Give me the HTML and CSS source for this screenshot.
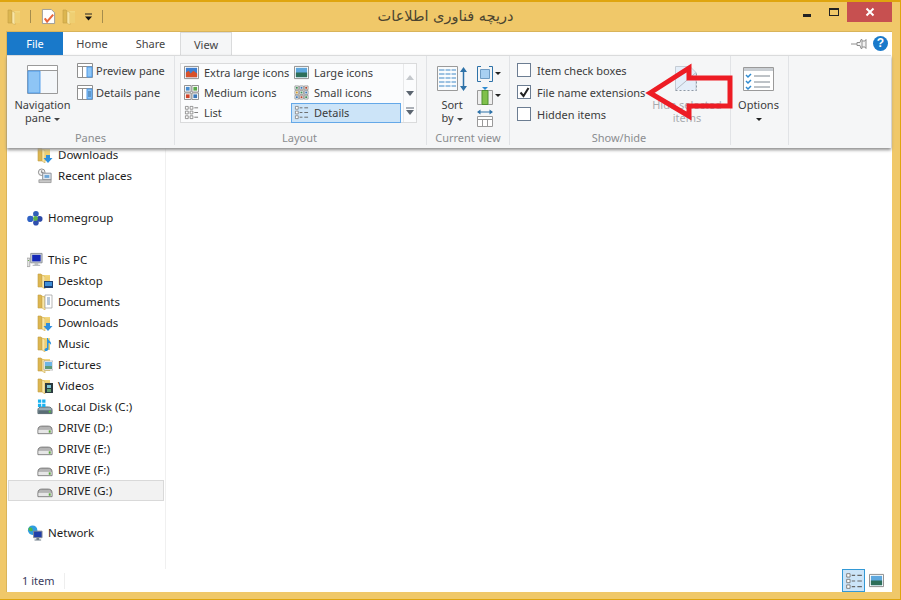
FILE: index.html
```html
<!DOCTYPE html>
<html lang="en">
<head>
    <meta charset="UTF-8">
    <meta name="viewport" content="width=device-width, initial-scale=1.0">
    <title>Explorer</title>
    <link rel="stylesheet" href="styles.css">
</head>
<body>
<svg class="defs" width="0" height="0">
    <symbol id="folder" viewBox="0 0 16 16">
        <path d="M1 1h3l1 1v12H1z" fill="#dcb650" stroke="#c4a045" stroke-width=".6"/>
        <path d="M5 2h8v12H5z" fill="#f2d77f"/>
        <path d="M5 2l3 1.500V16L5 14z" fill="#f8e6a6" stroke="#d0ac50" stroke-width=".6"/>
        <path d="M8 3.500h5V14H8z" fill="#efcf72"/>
    </symbol>
    <symbol id="folder-down" viewBox="0 0 16 16">
        <use href="#folder"/>
        <path d="M9 8h4v3h2.500l-4.500 5-4.500-5H9z" fill="#2f8fde"/>
    </symbol>
    <symbol id="folder-desk" viewBox="0 0 16 16">
        <use href="#folder"/>
        <path d="M7 8h9v7H7z" fill="#1d3f73"/><path d="M8 9h7v4H8z" fill="#3f8fd8"/>
    </symbol>
    <symbol id="folder-doc" viewBox="0 0 16 16">
        <use href="#folder"/>
        <path d="M8 1h7v13H8z" fill="#fff" stroke="#9a9a9a" stroke-width=".7"/>
        <path d="M10 4h3M10 6h3M10 8h3M10 10h3" stroke="#6d8fb5"/>
    </symbol>
    <symbol id="folder-music" viewBox="0 0 16 16">
        <use href="#folder"/>
        <path d="M10 2l1 0c0 3 4 3 3 7-.5-1.500-1.500-2-2.500-2v6c0 2-4 3-4 1 0-1.500 1.500-2 2.500-2z" fill="#2a94e0"/>
    </symbol>
    <symbol id="folder-pic" viewBox="0 0 16 16">
        <use href="#folder"/>
        <path d="M7 4h9v9H7z" fill="#fff" stroke="#a5a5a5" stroke-width=".7"/>
        <path d="M8 5h7v4H8z" fill="#6db6e6"/><path d="M8 9h7v3H8z" fill="#5c9a78"/>
    </symbol>
    <symbol id="folder-vid" viewBox="0 0 16 16">
        <use href="#folder"/>
        <path d="M8 5h8v10H8z" fill="#2b3a40"/><path d="M10 7h4v3h-4z" fill="#7ec6d8"/><path d="M10 11h4v3h-4z" fill="#5f9e6e"/>
    </symbol>
    <symbol id="drive" viewBox="0 0 17 16">
        <path d="M1 10c0-3 2-4 4-4h7c2 0 4 1 4 4v4H1z" fill="#b4b4b4" stroke="#757575"/>
        <path d="M1.500 10h14v3.500h-14z" fill="#e6e6e6"/>
        <path d="M12.500 10.500h2v2.500h-2z" fill="#58a83a"/>
    </symbol>
    <symbol id="drive-c" viewBox="0 0 17 16">
        <path d="M1 11c0-2 2-3 4-3h7c2 0 4 1 4 3v4H1z" fill="#9aabb3" stroke="#55666e"/>
        <path d="M1.500 11.500h14v3h-14z" fill="#5a6d76"/>
        <path d="M12.500 12h2v2h-2z" fill="#58c83a"/>
        <path d="M1 0h3.500v3.500H1zM5.500 0H9v3.500H5.500zM1 4.500h3.500V8H1zM5.500 4.500H9V8H5.500z" fill="#19b2f0"/>
    </symbol>
    <symbol id="recent" viewBox="0 0 17 16">
        <circle cx="5" cy="4" r="3.500" fill="#f2f2f2" stroke="#8a8a8a"/>
        <path d="M5 2v2.500h2" stroke="#555" fill="none" stroke-width=".8"/>
        <path d="M6 5h9v7H6z" fill="#dfe6ee" stroke="#8a8f96"/>
        <path d="M8 7h5v3H8z" fill="#6ca6d9"/>
        <path d="M2 12h13v3H2z" fill="#c8c8c8" stroke="#8a8a8a" stroke-width=".7"/>
    </symbol>
    <symbol id="homegroup" viewBox="0 0 17 16">
        <path d="M9 3L4 8l6 5 4-5z" fill="none" stroke="#7aa3c9"/>
        <circle cx="9.500" cy="3.500" r="3" fill="#2f5fb8"/>
        <circle cx="3.500" cy="9" r="3.300" fill="#2f62c4"/>
        <circle cx="13.500" cy="9" r="3" fill="#2c4aa8"/>
        <circle cx="9.500" cy="13" r="3" fill="#2f4fae"/>
        <circle cx="9" cy="8.500" r="2.600" fill="#5eb348"/>
    </symbol>
    <symbol id="thispc" viewBox="0 0 17 16">
        <path d="M0 6h3v9H0z" fill="#e4e4e4" stroke="#8f8f8f" stroke-width=".7"/>
        <path d="M1 8h1v1H1z" fill="#58a83a"/>
        <path d="M4 1h12v10H4z" fill="#cfd4d8" stroke="#8a8f96"/>
        <path d="M5.500 2.500h9v7h-9z" fill="#1428b8"/>
        <path d="M8 11h4v2h2v1.500H6V13h2z" fill="#b9bdc1"/>
    </symbol>
    <symbol id="network" viewBox="0 0 17 16">
        <circle cx="6" cy="5" r="5" fill="#2f9de0"/>
        <path d="M3 2c2 0 3 1 3 3S3 6 2 5s0-3 1-3zM8 6c1 0 2 1 1 3S7 8 8 6z" fill="#4fb848"/>
        <path d="M7 6h9v7H7z" fill="#1f3fa8" stroke="#8a8f96"/>
        <path d="M10 13h3v2h2v1H8v-1h2z" fill="#6f7c88"/>
    </symbol>
    <symbol id="s-list" viewBox="0 0 16 16">
        <path d="M1.500 1.500h3v3h-3zM1.500 6.500h3v3h-3zM1.500 11.500h3v3h-3zM6.500 1.500h3v3h-3zM6.500 6.500h3v3h-3zM6.500 11.500h3v3h-3z" fill="#fff" stroke="#777" stroke-width=".8"/>
        <path d="M11 3h4M11 8h4M11 13h4" stroke="#777"/>
    </symbol>
    <symbol id="s-details" viewBox="0 0 16 16">
        <path d="M1.500 1.500h3v3h-3zM1.500 6.500h3v3h-3zM1.500 11.500h3v3h-3z" fill="#fff" stroke="#777" stroke-width=".8"/>
        <path d="M6 3h3M11 3h4M6 8h3M11 8h4M6 13h3M11 13h4" stroke="#666"/>
    </symbol>
    <symbol id="s-large" viewBox="0 0 16 16">
        <path d="M.5 1.500h15v13H.5z" fill="#fff" stroke="#8a8a8a"/>
        <path d="M2 3h12v10H2z" fill="#5fa8de"/>
        <path d="M2 8h12v5H2z" fill="#2e6f5a"/>
    </symbol>
    <symbol id="s-xlarge" viewBox="0 0 16 16">
        <path d="M.5 1.500h15v13H.5z" fill="#fff" stroke="#8a8a8a"/>
        <path d="M2 3h12v10H2z" fill="#3f7fd0"/>
        <path d="M2 8l3-2 2 3 3-3 4 3v4H2z" fill="#d8512a"/>
    </symbol>
    <symbol id="s-medium" viewBox="0 0 16 16">
        <path d="M.5.500h7v7h-7zM8.500.500h7v7h-7zM.5 8.500h7v7h-7zM8.500 8.500h7v7h-7z" fill="#fff" stroke="#8a8a8a"/>
        <path d="M2 2h4v4H2z" fill="#4a8ed0"/><path d="M10 2h4v4h-4z" fill="#5aa84a"/>
        <path d="M2 10h4v4H2z" fill="#d0452a"/><path d="M10 10h4v4h-4z" fill="#3a78b8"/>
    </symbol>
    <symbol id="s-small" viewBox="0 0 16 16">
        <path d="M1 1h4v4H1zM6 1h4v4H6zM11 1h4v4h-4zM1 6h4v4H1zM6 6h4v4H6zM11 6h4v4h-4zM1 11h4v4H1zM6 11h4v4H6zM11 11h4v4h-4z" fill="#fff" stroke="#777" stroke-width=".7"/>
        <path d="M2 2h2v2H2z" fill="#3d8f5a"/><path d="M7 2h2v2H7z" fill="#3a78b8"/><path d="M12 2h2v2h-2z" fill="#b8452a"/>
        <path d="M2 7h2v2H2z" fill="#d09a2a"/><path d="M7 7h2v2H7z" fill="#3d8f5a"/><path d="M12 7h2v2h-2z" fill="#3a78b8"/>
        <path d="M2 12h2v2H2z" fill="#3a78b8"/><path d="M7 12h2v2H7z" fill="#b8452a"/><path d="M12 12h2v2h-2z" fill="#3d8f5a"/>
    </symbol>
</svg>

<div class="window">
    <div class="titlebar">
        <div class="qat">
            <svg class="qat-folder"><use href="#folder"/></svg>
            <span class="qat-sep"></span>
            <svg class="qat-page" viewBox="0 0 16 16">
                <path d="M1.500.5H11l3.500 3.500v11.500h-13z" fill="#fff" stroke="#9a9a9a"/>
                <path d="M4 10l2.500 3.500L13 6" fill="none" stroke="#e8663c" stroke-width="2.200"/>
            </svg>
            <svg class="qat-folder qat-folder2"><use href="#folder"/></svg>
            <svg class="qat-drop" viewBox="0 0 9 8"><path d="M1 .5h7v1H1z" fill="#222"/><path d="M1 3.500h7L4.500 7.500z" fill="#111"/></svg>
            <span class="qat-sep qat-sep-last"></span>
        </div>
        <div class="title" dir="rtl">دریچه فناوری اطلاعات</div>
        <div class="controls">
            <span class="ctl ctl-min"></span>
            <span class="ctl ctl-max"></span>
            <span class="ctl-close">
                <svg width="10" height="10" viewBox="0 0 10 10"><path d="M1.500 1.500l7 7M8.500 1.500l-7 7" stroke="#fff" stroke-width="2"/></svg>
            </span>
        </div>
    </div>

    <div class="content">
        <div class="tabs">
            <div class="tab tab-file">File</div>
            <div class="tab tab-home">Home</div>
            <div class="tab tab-share">Share</div>
            <div class="tab tab-view">View</div>
            <div class="tab-tools">
                <svg width="16" height="12" viewBox="0 0 16 12"><path d="M0 6h6M6 4.500h3l1-3h1v9h-1l-1-3H6zM11 3h3l1-1.500v9L14 9h-3" fill="#f4f4f4" stroke="#8f8f8f"/></svg>
                <span class="help">?</span>
            </div>
        </div>

        <div class="ribbon">
            <div class="group group-panes">
                <div class="group-body">
                    <div class="big-btn big-nav">
                        <svg class="nav-ico" viewBox="0 0 31 29">
                            <path d="M.5.500h30v28H.5z" fill="#fff" stroke="#9a9a9a"/>
                            <path d="M.5 5.500h30" stroke="#9a9a9a"/>
                            <path d="M1 6h12v22H1z" fill="#8ec5f5" stroke="#4e9ae8"/>
                            <path d="M14 6h16v22H14z" fill="#f4f7fa"/>
                        </svg>
                        <span>Navigation</span>
                        <span>pane <i class="caret"></i></span>
                    </div>
                    <div class="pane-list">
                        <div class="pane-item">
                            <svg class="pane-ico" viewBox="0 0 16 15"><path d="M.5.500h15v14H.5zM.5 3.500h15M5.500 3.500v11" fill="#fff" stroke="#8f8f8f"/><path d="M10 4h5v10h-5z" fill="#8ec5f5" stroke="#4e9ae8"/></svg>
                            Preview pane
                        </div>
                        <div class="pane-item">
                            <svg class="pane-ico" viewBox="0 0 16 15"><path d="M.5.500h15v14H.5zM.5 3.500h15M5.500 3.500v11" fill="#fff" stroke="#8f8f8f"/><path d="M10 4h5v10h-5z" fill="#8ec5f5" stroke="#4e9ae8"/><path d="M11 7h3M11 9h3M11 11h3" stroke="#33689c"/></svg>
                            Details pane
                        </div>
                    </div>
                </div>
                <div class="group-label">Panes</div>
            </div>

            <div class="group group-layout">
                <div class="group-body">
                    <div class="gallery">
                        <div class="gallery-grid">
                            <div class="gal-item"><svg class="gal-ico"><use href="#s-xlarge"/></svg>Extra large icons</div>
                            <div class="gal-item"><svg class="gal-ico"><use href="#s-large"/></svg>Large icons</div>
                            <div class="gal-item"><svg class="gal-ico"><use href="#s-medium"/></svg>Medium icons</div>
                            <div class="gal-item"><svg class="gal-ico"><use href="#s-small"/></svg>Small icons</div>
                            <div class="gal-item"><svg class="gal-ico"><use href="#s-list"/></svg>List</div>
                            <div class="gal-item gal-selected"><svg class="gal-ico"><use href="#s-details"/></svg>Details</div>
                        </div>
                        <div class="gal-scroll">
                            <svg width="8" height="5" viewBox="0 0 8 5"><path d="M0 5h8L4 0z" fill="#c4c8cc"/></svg>
                            <svg width="8" height="5" viewBox="0 0 8 5"><path d="M0 0h8L4 5z" fill="#5b6570"/></svg>
                            <svg width="8" height="8" viewBox="0 0 8 8"><path d="M0 .5h8v1H0z" fill="#5b6570"/><path d="M0 3h8L4 8z" fill="#5b6570"/></svg>
                        </div>
                    </div>
                </div>
                <div class="group-label">Layout</div>
            </div>

            <div class="group group-view">
                <div class="group-body">
                    <div class="big-btn big-sort">
                        <svg class="sort-ico" viewBox="0 0 31 26">
                            <path d="M.5.500h20v24H.5z" fill="#f8fbfd" stroke="#9a9a9a"/>
                            <path d="M2 4h17M2 8h17M2 12h17M2 16h17M2 20h17" stroke="#9cc2e2" stroke-width="2"/>
                            <path d="M8 2v21M14 2v21" stroke="#fff"/>
                            <path d="M26.500 3v20" stroke="#2e72a8" stroke-width="1.500"/>
                            <path d="M23 6l3.500-5L30 6zM23 20l3.500 5 3.500-5z" fill="#2e72a8"/>
                        </svg>
                        <span>Sort</span>
                        <span>by <i class="caret"></i></span>
                    </div>
                    <div class="view-tools">
                        <div class="view-tool">
                            <svg width="16" height="16" viewBox="0 0 16 16"><path d="M4 .5H.5v15H4M12 .5h3.500v15H12" fill="none" stroke="#2e72a8"/><path d="M3.500 3.500h9v9h-9z" fill="#a8d0f2" stroke="#6f9cc4"/></svg>
                            <i class="caret caret-dark"></i>
                        </div>
                        <div class="view-tool">
                            <svg width="16" height="18" viewBox="0 0 16 18"><path d="M.5 3.500h15v14H.5z" fill="#eee" stroke="#9a9a9a"/><path d="M5 3.500h6v14H5z" fill="#7fc04a" stroke="#4e9030"/><path d="M5 0h6L8 3z" fill="#2e8ad0"/></svg>
                            <i class="caret caret-dark"></i>
                        </div>
                        <div class="view-tool">
                            <svg width="16" height="18" viewBox="0 0 16 18"><path d="M1 3h14" stroke="#2e72a8"/><path d="M3.500.5L0 3l3.500 2.500zM12.500.5L16 3l-3.500 2.500z" fill="#2e72a8"/><path d="M.5 7.500h15v10H.5zM.5 10.500h15M5.500 10.500v7M10.500 10.500v7" fill="#fff" stroke="#9a9a9a"/></svg>
                        </div>
                    </div>
                </div>
                <div class="group-label">Current view</div>
            </div>

            <div class="group group-show">
                <div class="group-body">
                    <div class="check-list">
                        <div class="check-item"><span class="box"></span>Item check boxes</div>
                        <div class="check-item">
                            <span class="box"><svg width="11" height="11" viewBox="0 0 11 11"><path d="M1.500 5.500l3 3.500 5-8" fill="none" stroke="#222" stroke-width="2"/></svg></span>
                            File name extensions
                        </div>
                        <div class="check-item"><span class="box"></span>Hidden items</div>
                    </div>
                    <div class="big-btn big-hide">
                        <svg class="hide-ico" viewBox="0 0 24 30">
                            <path d="M.5 25V1.500H15l6 6v18" fill="#e4eef9" stroke="#c5ccd4"/>
                            <path d="M.5 25L21 7.500" stroke="#b5bcc4" fill="none"/>
                            <path d="M.5 25.500h21V8" fill="none" stroke="#8f99a5" stroke-dasharray="2 2"/>
                        </svg>
                        <span>Hide selected</span>
                        <span>items</span>
                    </div>
                </div>
                <div class="group-label">Show/hide</div>
            </div>

            <div class="group group-options">
                <div class="group-body">
                    <div class="big-btn big-options">
                        <svg class="opt-ico" viewBox="0 0 31 24">
                            <path d="M.5.500h30v23H.5z" fill="#fff" stroke="#9a9a9a"/>
                            <path d="M1 1h29v3H1z" fill="#c9ced3"/>
                            <path d="M3 8l2 2 3-3M3 14l2 2 3-3M3 20l2 2 3-3" fill="none" stroke="#2e8ad0" stroke-width="1.500"/>
                            <path d="M11 9h16M11 15h16M11 20h16" stroke="#7d868f"/>
                        </svg>
                        <span>Options</span>
                        <span><i class="caret caret-dark"></i></span>
                    </div>
                </div>
            </div>
        </div>

        <div class="main">
            <div class="nav">
                <div class="nav-row lvl2"><svg class="nav-icon"><use href="#folder-down"/></svg>Downloads</div>
                <div class="nav-row lvl2"><svg class="nav-icon"><use href="#recent"/></svg>Recent places</div>
                <div class="nav-gap"></div>
                <div class="nav-row lvl1"><svg class="nav-icon"><use href="#homegroup"/></svg>Homegroup</div>
                <div class="nav-gap"></div>
                <div class="nav-row lvl1"><svg class="nav-icon"><use href="#thispc"/></svg>This PC</div>
                <div class="nav-row lvl2"><svg class="nav-icon"><use href="#folder-desk"/></svg>Desktop</div>
                <div class="nav-row lvl2"><svg class="nav-icon"><use href="#folder-doc"/></svg>Documents</div>
                <div class="nav-row lvl2"><svg class="nav-icon"><use href="#folder-down"/></svg>Downloads</div>
                <div class="nav-row lvl2"><svg class="nav-icon"><use href="#folder-music"/></svg>Music</div>
                <div class="nav-row lvl2"><svg class="nav-icon"><use href="#folder-pic"/></svg>Pictures</div>
                <div class="nav-row lvl2"><svg class="nav-icon"><use href="#folder-vid"/></svg>Videos</div>
                <div class="nav-row lvl2"><svg class="nav-icon"><use href="#drive-c"/></svg>Local Disk (C:)</div>
                <div class="nav-row lvl2"><svg class="nav-icon"><use href="#drive"/></svg>DRIVE (D:)</div>
                <div class="nav-row lvl2"><svg class="nav-icon"><use href="#drive"/></svg>DRIVE (E:)</div>
                <div class="nav-row lvl2"><svg class="nav-icon"><use href="#drive"/></svg>DRIVE (F:)</div>
                <div class="nav-row lvl2 nav-selected"><svg class="nav-icon"><use href="#drive"/></svg>DRIVE (G:)</div>
                <div class="nav-gap"></div>
                <div class="nav-row lvl1"><svg class="nav-icon"><use href="#network"/></svg>Network</div>
            </div>
            <div class="files"></div>
        </div>

        <div class="statusbar">
            <span class="status-count">1 item</span>
            <div class="status-views">
                <span class="view-btn view-btn-on"><svg width="18" height="18"><use href="#s-details"/></svg></span>
                <span class="view-btn"><svg width="15" height="15"><use href="#s-large"/></svg></span>
            </div>
        </div>
    </div>

    <svg class="red-arrow" width="100" height="72" viewBox="0 0 100 72">
        <path d="M8 33L47 8v10h41v28H47v10z" fill="none" stroke="#ed1c24" stroke-width="5" stroke-linejoin="miter"/>
    </svg>
</div>
</body>
</html>
```

FILE: styles.css
```css
* {
    box-sizing: border-box;
}
body {
    margin: 0;
    font-family: "Noto Sans", Arial, sans-serif;
    font-size: 11px;
    color: #3c3c3c;
}
.defs {
    position: absolute;
}
.window {
    position: relative;
    width: 901px;
    height: 600px;
    overflow: hidden;
    background-color: #f0c869;
    border-top: 2px solid #dfa50f;
    border-right: 1px solid #dfa50f;
    border-bottom: 1px solid #dfa50f;
    padding: 0 8px 7px 6px;
    display: flex;
    flex-direction: column;
}

/* title bar */
.titlebar {
    height: 29px;
    flex-shrink: 0;
    display: flex;
    align-items: flex-start;
}
.qat {
    width: 120px;
    height: 29px;
    display: flex;
    align-items: center;
    padding-left: 1px;
}
.qat-folder {
    width: 16px;
    height: 16px;
    flex-shrink: 0;
}
.qat-sep {
    width: 1px;
    height: 13px;
    margin-left: 7px;
    background-color: #a58c4c;
}
.qat-page {
    width: 15px;
    height: 17px;
    margin-left: 10px;
}
.qat-folder2 {
    margin-left: 6px;
}
.qat-drop {
    width: 9px;
    height: 8px;
    margin-left: 6px;
}
.qat-sep-last {
    margin-left: 9px;
}
.title {
    flex: 1;
    text-align: center;
    font-family: "DejaVu Sans", sans-serif;
    font-size: 14.5px;
    line-height: 29px;
    color: #4a4430;
    padding-right: 7px;
}
.controls {
    width: 120px;
    display: flex;
    justify-content: flex-end;
    align-items: flex-start;
}
.ctl-min {
    width: 8px;
    height: 3px;
    margin-top: 12px;
    margin-right: 18px;
    background-color: #222;
}
.ctl-max {
    width: 10px;
    height: 8px;
    margin-top: 6px;
    margin-right: 8px;
    border: 1px solid #222;
    border-top-width: 2px;
}
.ctl-close {
    width: 45px;
    height: 20px;
    background-color: #c75050;
    display: flex;
    align-items: center;
    justify-content: center;
}

/* tabs */
.content {
    flex: 1;
    display: flex;
    flex-direction: column;
    background-color: #fff;
    border: 1px solid #d9b45a;
    border-width: 1px 0 0 1px;
    min-height: 0;
}
.tabs {
    height: 23px;
    display: flex;
    flex-shrink: 0;
}
.tab {
    line-height: 23px;
    text-align: center;
    color: #444;
}
.tab-file {
    width: 56px;
    background-color: #1979ca;
    color: #fff;
}
.tab-home {
    width: 58px;
}
.tab-share {
    width: 59px;
}
.tab-view {
    width: 52px;
    background-color: #f5f6f7;
    border: 1px solid #dadbdc;
    border-bottom: none;
}
.tab-tools {
    margin-left: auto;
    display: flex;
    align-items: center;
    padding-right: 4px;
    gap: 6px;
}
.help {
    width: 15px;
    height: 15px;
    border-radius: 50%;
    background-color: #1979ca;
    color: #fff;
    font: bold 12px/15px "Liberation Sans", sans-serif;
    text-align: center;
}

/* ribbon */
.ribbon {
    position: relative;
    z-index: 2;
    height: 93px;
    flex-shrink: 0;
    display: flex;
    background-color: #f5f6f7;
    border-top: 1px solid #dadbdc;
    box-shadow: 0 2px 3px #8f8f8f;
    margin-right: 1px;
}
.group {
    height: 89px;
    border-right: 1px solid #e1e3e6;
    display: flex;
    flex-direction: column;
}
.group-panes {
    width: 168px;
}
.group-layout {
    width: 252px;
}
.group-view {
    width: 83px;
}
.group-show {
    width: 221px;
}
.group-options {
    width: 58px;
}
.group-body {
    flex: 1;
    display: flex;
    min-height: 0;
}
.group-label {
    text-align: center;
    color: #8b8d90;
    line-height: 15px;
}
.group-layout .group-label,
.group-show .group-label {
    padding-right: 2px;
}
.big-btn {
    display: flex;
    flex-direction: column;
    align-items: center;
    line-height: 13px;
}
.caret {
    display: inline-block;
    border: 3px solid transparent;
    border-top: 3px solid #444;
    border-bottom: none;
    vertical-align: middle;
}
.caret-dark {
    border-top-color: #222;
}
.big-nav {
    width: 71px;
    padding-top: 9px;
}
.nav-ico {
    width: 31px;
    height: 29px;
    margin-bottom: 4px;
}
.pane-list {
    margin-left: -1px;
    padding-top: 7px;
    display: flex;
    flex-direction: column;
    gap: 7px;
}
.pane-item {
    height: 15px;
    display: flex;
    align-items: center;
    gap: 3px;
    white-space: nowrap;
}
.pane-ico {
    width: 16px;
    height: 15px;
    flex-shrink: 0;
}
.gallery {
    width: 237px;
    height: 60px;
    margin: 7px 0 0 5px;
    border: 1px solid #dadbdc;
    background-color: #fbfcfd;
    display: flex;
}
.gallery-grid {
    width: 221px;
    display: grid;
    grid-template-columns: 110px 110px;
    grid-auto-rows: 20px;
    margin-top: -1px;
}
.gal-item {
    display: flex;
    align-items: center;
    padding: 0 0 1px 3px;
    white-space: nowrap;
}
.gal-ico {
    width: 15px;
    height: 15px;
    margin-right: 5px;
    flex-shrink: 0;
}
.gal-selected {
    background-color: #cce4f8;
    border: 1px solid #64a8e8;
    padding-left: 2px;
}
.gal-scroll {
    flex: 1;
    border-left: 1px solid #e8e9ea;
    display: flex;
    flex-direction: column;
    align-items: center;
    justify-content: space-around;
    padding: 5px 0 2px;
    margin-left: 1px;
}
.big-sort {
    width: 50px;
    padding-top: 10px;
}
.sort-ico {
    width: 31px;
    height: 26px;
    margin-bottom: 6px;
}
.view-tools {
    padding-top: 8px;
    display: flex;
    flex-direction: column;
    gap: 3px;
}
.view-tool {
    height: 19px;
    display: flex;
    align-items: center;
    gap: 2px;
}
.check-list {
    width: 137px;
    padding: 4px 0 0 7px;
    display: flex;
    flex-direction: column;
    gap: 2px;
}
.check-item {
    height: 20px;
    display: flex;
    align-items: center;
    gap: 6px;
    white-space: nowrap;
}
.box {
    width: 14px;
    height: 14px;
    background-color: #fff;
    border: 1px solid #6c7d92;
    display: flex;
    align-items: center;
    justify-content: center;
    flex-shrink: 0;
}
.big-hide {
    width: 80px;
    padding-top: 9px;
    color: #a9acb0;
    white-space: nowrap;
}
.hide-ico {
    width: 24px;
    height: 30px;
    margin-bottom: 3px;
}
.big-options {
    width: 55px;
    padding-top: 11px;
}
.opt-ico {
    width: 31px;
    height: 24px;
    margin-bottom: 7px;
}

/* nav pane and files */
.main {
    flex: 1;
    display: flex;
    min-height: 0;
    margin-top: -4px;
}
.nav {
    width: 159px;
    flex-shrink: 0;
    border-right: 1px solid #f0f0f0;
    padding-left: 1px;
    color: #1c1c1c;
    font-size: 11.5px;
}
.nav-row {
    height: 21px;
    display: flex;
    align-items: center;
    white-space: nowrap;
}
.nav-gap {
    height: 21px;
}
.lvl1 {
    padding-left: 19px;
}
.lvl2 {
    padding-left: 29px;
}
.nav-icon {
    width: 16px;
    height: 16px;
    margin-right: 5px;
    flex-shrink: 0;
}
.nav-selected {
    background-color: #f2f2f2;
    border: 1px solid #d9d9d9;
    width: 156px;
    padding-left: 28px;
}
.files {
    flex: 1;
}

/* status bar */
.statusbar {
    height: 23px;
    flex-shrink: 0;
    display: flex;
    align-items: center;
    padding-left: 15px;
}
.status-count {
    width: 43px;
    line-height: 16px;
    border-right: 1px solid #eee;
    color: #3a3a5c;
}
.status-views {
    margin-left: auto;
    display: flex;
    align-items: center;
    gap: 3px;
    padding-right: 8px;
}
.view-btn {
    width: 16px;
    height: 23px;
    display: flex;
    align-items: center;
    justify-content: center;
}
.view-btn-on {
    width: 23px;
    background-color: #cce4f8;
    border: 1px solid #3399d6;
}

/* annotation over the ribbon */
.red-arrow {
    position: absolute;
    z-index: 3;
    left: 642px;
    top: 58px;
}
```
